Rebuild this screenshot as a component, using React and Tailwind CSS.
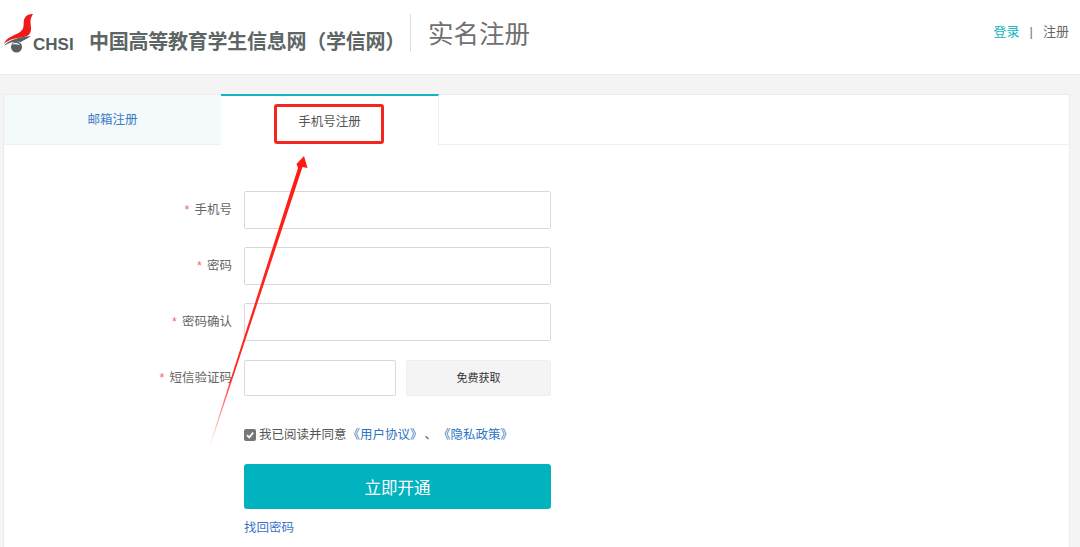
const cjk = { fontFamily: '"Liberation Sans", "Noto Sans CJK SC", sans-serif' };

function Logo() {
  return (
    <div className="relative w-[76px] h-[50px] shrink-0">
      <svg width="34" height="42" viewBox="0 0 34 42" className="absolute left-0 top-[10px]">
        <path d="M30 0 C25 0 22 2 21 6 C20 11 22 14 17 18 C11 22 3 23 1 30 C6 25 14 24 21 23 C26 22 28 19 28 15 C28 10 26 6 30 0 Z" fill="#f01818" />
        <path d="M1 32 C5 26 16 23 28 22 C24 25 20 26 18 28 C12 27 6 28 1 32 Z" fill="#56605f" />
        <circle cx="13.5" cy="33" r="5.5" fill="#56605f" />
        <path d="M9 30.5 C11 28.5 15 28.5 17 31 C14 30 12 30 9 30.5 Z" fill="#fff" />
      </svg>
      <span className="absolute left-[30px] top-[31px] text-[17px] leading-[20px] font-bold text-[#56605f]">CHSI</span>
    </div>
  );
}

function Field({ label, children }) {
  return (
    <div className="flex items-center">
      <label className="w-[228px] text-right text-[12.5px] text-[#666666]">
        <span className="text-[#f06a6a] mr-[5px]">*</span>
        {label}
      </label>
      <div className="ml-[12px] flex gap-[10px]">{children}</div>
    </div>
  );
}

export default function App() {
  return (
    <div className="relative w-[1080px] h-[547px] overflow-hidden bg-[#f4f4f4]" style={cjk}>
      <header className="h-[75px] bg-white border-b border-[#ececec] flex items-start">
        <div className="ml-[3px] mt-[4px]"><Logo /></div>
        <h1 className="ml-[10px] mt-[29px] text-[20px] leading-[26px] font-semibold tracking-[-0.25px] text-[#5d6665] whitespace-nowrap">
          中国高等教育学生信息网（学信网）
        </h1>
        <div className="ml-[5px] mt-[14px] w-px h-[38px] bg-[#dddddd]" />
        <div className="ml-[17px] mt-[18px] text-[25.5px] leading-[33px] text-[#707070]">实名注册</div>
        <nav className="ml-auto mr-[11px] mt-[24px] flex items-center text-[13px] leading-[16px] text-[#666666]">
          <a className="text-[#0fb5c0]">登录</a>
          <span className="mx-[10px] text-[#777777]">|</span>
          <a>注册</a>
        </nav>
      </header>

      <main className="mt-[19px] ml-[3px] w-[1067px] h-[460px] bg-white border border-[#ececec] border-b-0">
        <div className="flex h-[50px] border-b border-[#efefef]">
          <div className="w-[217px] bg-[#f4f9fa] flex items-center justify-center pt-[1px] text-[12.5px] text-[#3b7cc9]">邮箱注册</div>
          <div className="w-[218px] -mt-px -mb-px pt-[3px] bg-white border-t-2 border-[#14b4c0] border-r border-r-[#efefef] flex items-center justify-center text-[12.5px] text-[#555555]">手机号注册</div>
        </div>

        <form className="pt-[46px] flex flex-col">
          <Field label="手机号">
            <input className="w-[307px] h-[38px] bg-white border border-[#d9d9d9] rounded-[2px]" />
          </Field>
          <div className="h-[18px]" />
          <Field label="密码">
            <input type="password" className="w-[307px] h-[38px] bg-white border border-[#d9d9d9] rounded-[2px]" />
          </Field>
          <div className="h-[18px]" />
          <Field label="密码确认">
            <input type="password" className="w-[307px] h-[38px] bg-white border border-[#d9d9d9] rounded-[2px]" />
          </Field>
          <div className="h-[19px]" />
          <Field label="短信验证码">
            <input className="w-[152px] h-[36px] bg-white border border-[#d9d9d9] rounded-[2px]" />
            <button type="button" className="w-[145px] h-[36px] bg-[#f4f4f4] border border-[#eeeeee] rounded-[2px] text-[11px] text-[#333333]">免费获取</button>
          </Field>

          <div className="ml-[240px] mt-[30px] flex items-center h-[18px] text-[12.5px] text-[#555555] whitespace-nowrap">
            <span className="w-[12px] h-[12px] rounded-[2px] bg-[#767676] flex items-center justify-center">
              <svg width="10" height="10" viewBox="0 0 10 10"><path d="M2 5.2 L4.2 7.4 L8.2 2.6" fill="none" stroke="#fff" strokeWidth="1.7" /></svg>
            </span>
            <span className="ml-[3px]">我已阅读并同意</span>
            <a className="text-[#2f74c0] ml-[1px]">《用户协议》</a>
            <span className="ml-[2px]">、</span>
            <a className="text-[#2f74c0] ml-[1px]">《隐私政策》</a>
          </div>

          <button type="button" className="ml-[240px] mt-[20px] w-[307px] h-[45px] pt-[3px] bg-[#00b3bf] rounded-[3px] text-[16.5px] text-white">立即开通</button>
          <a className="ml-[240px] mt-[11px] text-[12.5px] leading-[16px] text-[#3b74c9]">找回密码</a>
        </form>
      </main>

      {/* annotation drawn over the page */}
      <div className="absolute left-[274px] top-[104px] w-[110px] h-[40px] border-[3px] border-[#f5261f] rounded-[3px]" />
      <svg width="1080" height="547" className="absolute left-0 top-0 pointer-events-none">
        <defs>
          <linearGradient id="tail" x1="209" y1="447" x2="305" y2="155" gradientUnits="userSpaceOnUse">
            <stop offset="0" stopColor="#ff2a20" stopOpacity="0" />
            <stop offset="0.25" stopColor="#ff2a20" />
            <stop offset="1" stopColor="#ff1a14" />
          </linearGradient>
        </defs>
        <path d="M209 447 L298 168 L296.5 164 L304 156 L307.5 168 L302.5 167 L210 447 Z" fill="url(#tail)" />
      </svg>
    </div>
  );
}
